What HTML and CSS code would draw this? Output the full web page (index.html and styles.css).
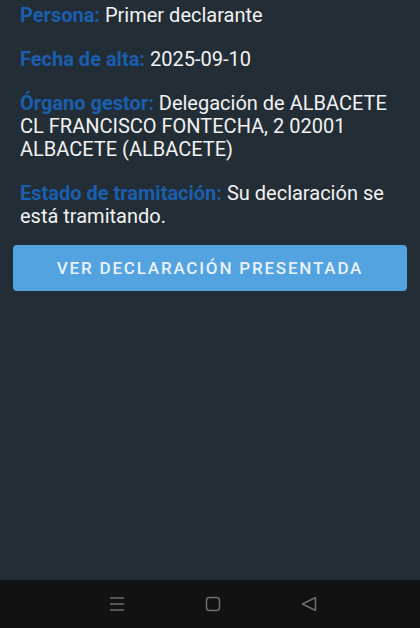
FILE: index.html
```html
<!DOCTYPE html>
<html lang="es">
<head>
    <meta charset="UTF-8">
    <meta name="viewport" content="width=device-width, initial-scale=1.0">
    <title>Declaración</title>
    <link rel="stylesheet" href="styles.css">
</head>
<body>
    <div class="screen">
        <div class="details">
            <div class="fields">
                <p class="field"><span class="label">Persona:</span> Primer declarante</p>
                <p class="field"><span class="label">Fecha de alta:</span> 2025-09-10</p>
                <p class="field"><span class="label">Órgano gestor:</span> Delegación de ALBACETE CL FRANCISCO FONTECHA, 2 02001 ALBACETE (ALBACETE)</p>
                <p class="field"><span class="label">Estado de tramitación:</span> Su declaración se está tramitando.</p>
            </div>
            <button class="viewButton">VER DECLARACIÓN PRESENTADA</button>
        </div>

        <!-- barra de navegación del sistema -->
        <div class="navBar">
            <svg class="navIcon" width="16" height="16" viewBox="0 0 16 16">
                <path d="M1 2h14M1 8h14M1 14h14" stroke="#6e6e6e" stroke-width="1.5" fill="none"/>
            </svg>
            <svg class="navIcon" width="16" height="16" viewBox="0 0 16 16">
                <rect x="1.5" y="1.5" width="13" height="13" rx="3" stroke="#6e6e6e" stroke-width="1.5" fill="none"/>
            </svg>
            <svg class="navIcon" width="16" height="16" viewBox="0 0 16 16">
                <path d="M1.5 8L14.5 1.5V14.5Z" stroke="#6e6e6e" stroke-width="1.5" stroke-linejoin="round" fill="none"/>
            </svg>
        </div>
    </div>
</body>
</html>
```

FILE: styles.css
```css
body {
    margin: 0;
    background: #232d36;
    font-family: Roboto, "Noto Sans", "Liberation Sans", sans-serif;
}
.screen {
    display: flex;
    flex-direction: column;
    height: 628px;
}
.details {
    flex: 1;
    padding: 4px 13px 0;
}
.fields {
    display: flex;
    flex-direction: column;
    gap: 21px;
    padding: 0 7px;
}
.field {
    margin: 0;
    font-size: 20px;
    line-height: 23px;
    color: #f2f2f2;
}
.label {
    color: #1a5fae;
    font-weight: 700;
}
.viewButton {
    display: block;
    width: 100%;
    height: 46px;
    margin-top: 17px;
    border: none;
    border-radius: 4px;
    background: #52a3e0;
    color: #e9f2fb;
    font-family: inherit;
    font-size: 17px;
    font-weight: 500;
    letter-spacing: 1.8px;
}
.navBar {
    height: 48px;
    background: #121212;
    display: flex;
    align-items: center;
    justify-content: center;
    gap: 80px;
    padding-left: 5px;
}
.navIcon {
    display: block;
}
```
